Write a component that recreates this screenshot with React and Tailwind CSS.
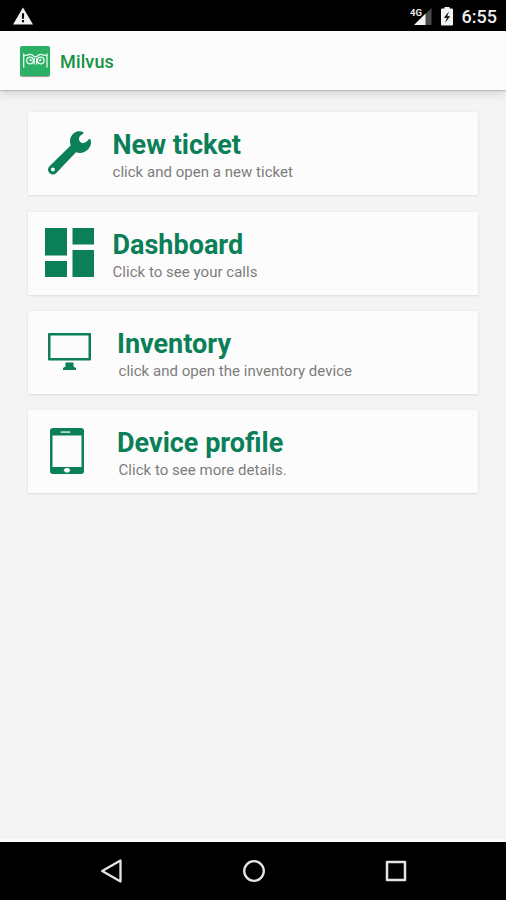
import React from "react";

const WrenchIcon = () => (
  <svg className="w-[43px] h-[44px]" viewBox="0 0 43 44" fill="#0a7f58">
    <path
      fillRule="evenodd"
      d="M35.200 1.300C32.500-.3 28.500 0 25.700 2.300c-3.600 3-4.500 7.800-3 12.200L1.500 35.200c-2 2-2 5-.1 6.900 1.900 1.900 4.900 1.800 6.900-.2L28 21.200c4.300 1.500 9 .5 12.200-3 2.600-2.800 3.400-6 2.300-9.700-.6-.8-1.500-.5-2.200.3-1.500 2-3.200 3.300-5.300 3.200-2.600-.1-4.200-2-4-4.500.1-2 1.600-3.300 3.400-4.300 1-.6 1.400-1.300.8-1.900ZM4.900 36.500a2 2 0 1 1 0 4 2 2 0 0 1 0-4Z"
    />
  </svg>
);

const DashboardIcon = () => (
  <svg className="w-[49px] h-[49px]" viewBox="0 0 49 49" fill="#0a7f58">
    <path d="M0 0h22v27.500H0zM27.500 0H49v16.500H27.500zM0 33h22v16H0zM27.500 22H49v27H27.500z" />
  </svg>
);

const MonitorIcon = () => (
  <svg className="w-[43px] h-[37px]" viewBox="0 0 43 37" fill="#0a7f58">
    <path
      fillRule="evenodd"
      d="M1 0h41Q43 0 43 1v25.500q0 1-1 1H1q-1 0-1-1V1Q0 0 1 0ZM2.500 2.500v22.500h38V2.500z"
    />
    <path d="M17.500 29.500h8v4l2.500 1.500V37H15v-2l2.500-1.500z" />
  </svg>
);

const DeviceIcon = () => (
  <svg className="w-[34px] h-[46px]" viewBox="0 0 34 46">
    <rect width="34" height="46" rx="3" fill="#0a7f58" />
    <rect x="2.500" y="7.500" width="29" height="31.500" fill="#fcfcfc" />
    <rect x="10.500" y="3.200" width="10" height="1.800" rx=".9" fill="#b9d8cd" />
    <path d="M15.500 40h3l2 2.300-2 2.300h-3l-2-2.300z" fill="#fcfcfc" />
  </svg>
);

const items = [
  {
    title: "New ticket",
    text: "click and open a new ticket",
    icon: <WrenchIcon />,
    iconBox: "ml-5 mt-[19px] w-[64.5px]",
    textStyle: "",
  },
  {
    title: "Dashboard",
    text: "Click to see your calls",
    icon: <DashboardIcon />,
    iconBox: "ml-[17px] mt-4 w-[67.5px]",
    textStyle: "",
  },
  {
    title: "Inventory",
    text: "click and open the inventory device",
    icon: <MonitorIcon />,
    iconBox: "ml-5 mt-[22px] w-[69px]",
    textStyle: "pl-[1.5px]",
  },
  {
    title: "Device profile",
    text: "Click to see more details.",
    icon: <DeviceIcon />,
    iconBox: "ml-[22px] mt-[18px] w-[67px]",
    textStyle: "pl-[1.5px]",
  },
];

function StatusBar() {
  return (
    <div className="h-[31px] shrink-0 bg-black flex items-start justify-between pl-[12.5px] pr-[9px] text-white">
      <svg className="mt-[7px] w-5 h-[18px]" viewBox="0 0 21 18">
        <path d="M10.500 0 21 18H0z" fill="#f2f2f2" />
        <path d="M9.400 6h2.200v6H9.400zM9.400 13.200h2.200v2.300H9.400z" fill="#000" />
      </svg>
      <div className="flex items-start">
        <svg className="mt-[6px] w-[23px] h-[20px]" viewBox="0 0 23 20">
          <path d="M22.500 2v17H12V12.500z" fill="#4a4a4a" />
          <path d="M16.500 7.500V19H5z" fill="#f2f2f2" />
          <text
            x="1"
            y="9.500"
            fontFamily="Roboto, sans-serif"
            fontSize="9.500"
            fontWeight="700"
            fill="#e8e8e8"
            stroke="#000"
            strokeWidth="1"
            paintOrder="stroke"
          >
            4G
          </text>
        </svg>
        <svg className="ml-[9px] mt-[7px] w-3 h-[19px]" viewBox="0 0 12 19">
          <path
            d="M3.500 0h5v1.500H11q1 0 1 1V17.500q0 1-1 1H1q-1 0-1-1V2.500q0-1 1-1h2.500z"
            fill="#f2f2f2"
          />
          <path d="M8 4.500 2.800 10.800h3.200l-2 5 5.200-6.600H6.200z" fill="#000" />
        </svg>
        <span className="ml-[9px] mt-[6px] text-[18px] leading-[22px] font-medium text-[#eeeeee]">
          6:55
        </span>
      </div>
    </div>
  );
}

function Header() {
  return (
    <header className="relative h-[59px] shrink-0 bg-[#fcfcfc] flex items-center pl-5 shadow-[0_1px_1px_rgba(0,0,0,0.16),0_4px_9px_rgba(0,0,0,0.13)]">
      <svg
        className="mt-px w-[30px] h-[30px] rounded-[2px] bg-[#2bb065] shadow-[0_1px_1px_rgba(0,0,0,0.4)]"
        viewBox="0 0 30 30"
        fill="none"
        stroke="#e9f8ef"
        strokeWidth="1.300"
      >
        <path d="M3.700 7.500v14M27 7.500v14M4 10c2-1.500 3-1 4-.5M27 10c-2-1.500-3-1-4-.5M7 9.500c2-1.800 5-1.500 6.500.5 1.300 1 2.700 1 4 0 1.500-2 4.500-2.300 6.500-.5M14.200 12v6.500M16.700 12v6.500" />
        <circle cx="10" cy="14.500" r="3.300" />
        <circle cx="20.800" cy="14.500" r="3.300" />
        <path d="M10.300 12.800v1.700h1.500M20.500 12.800v1.700H19" />
      </svg>
      <h1 className="ml-[10px] mt-[2px] text-[18px] leading-6 font-medium tracking-[0.15px] text-[#169246]">
        Milvus
      </h1>
    </header>
  );
}

function MenuCard({ item }) {
  return (
    <div className="h-[83px] flex items-start bg-[#fcfcfc] shadow-[0_1px_2px_rgba(0,0,0,0.08),0_0_2px_rgba(0,0,0,0.06)]">
      <div className={`shrink-0 ${item.iconBox}`}>{item.icon}</div>
      <div className="pt-[17px] whitespace-nowrap">
        <h2 className="text-[27px] leading-8 font-bold text-[#0a7f58]">
          {item.title}
        </h2>
        <p
          className={`mt-px text-[15px] leading-5 tracking-[0.03px] text-[#7c7c7c] ${item.textStyle}`}
        >
          {item.text}
        </p>
      </div>
    </div>
  );
}

function NavBar() {
  return (
    <nav className="h-[58px] shrink-0 bg-black flex items-center justify-between pl-[99px] pr-[98px]">
      <svg className="w-6 h-6" viewBox="0 0 24 24" fill="none" stroke="#e4e4e4" strokeWidth="2.300" strokeLinejoin="round">
        <path d="M21.500 1.500v21L3.200 12z" />
      </svg>
      <svg className="w-6 h-6" viewBox="0 0 24 24" fill="none" stroke="#e4e4e4" strokeWidth="2.300">
        <circle cx="12" cy="12" r="9.800" />
      </svg>
      <svg className="w-6 h-6" viewBox="0 0 24 24" fill="none" stroke="#e4e4e4" strokeWidth="2.500" strokeLinejoin="round">
        <rect x="3" y="3" width="18" height="18" />
      </svg>
    </nav>
  );
}

function App() {
  return (
    <div className="w-full h-screen flex flex-col overflow-hidden bg-[#f4f4f4] font-['Roboto',sans-serif]">
      <StatusBar />
      <Header />
      <main className="flex-1 px-7 pt-[22.4px] flex flex-col gap-[16.3px]">
        {items.map((item) => (
          <MenuCard key={item.title} item={item} />
        ))}
      </main>
      <div className="h-[3px] shrink-0 bg-[#fcfcfc]" />
      <NavBar />
    </div>
  );
}

export default App;
